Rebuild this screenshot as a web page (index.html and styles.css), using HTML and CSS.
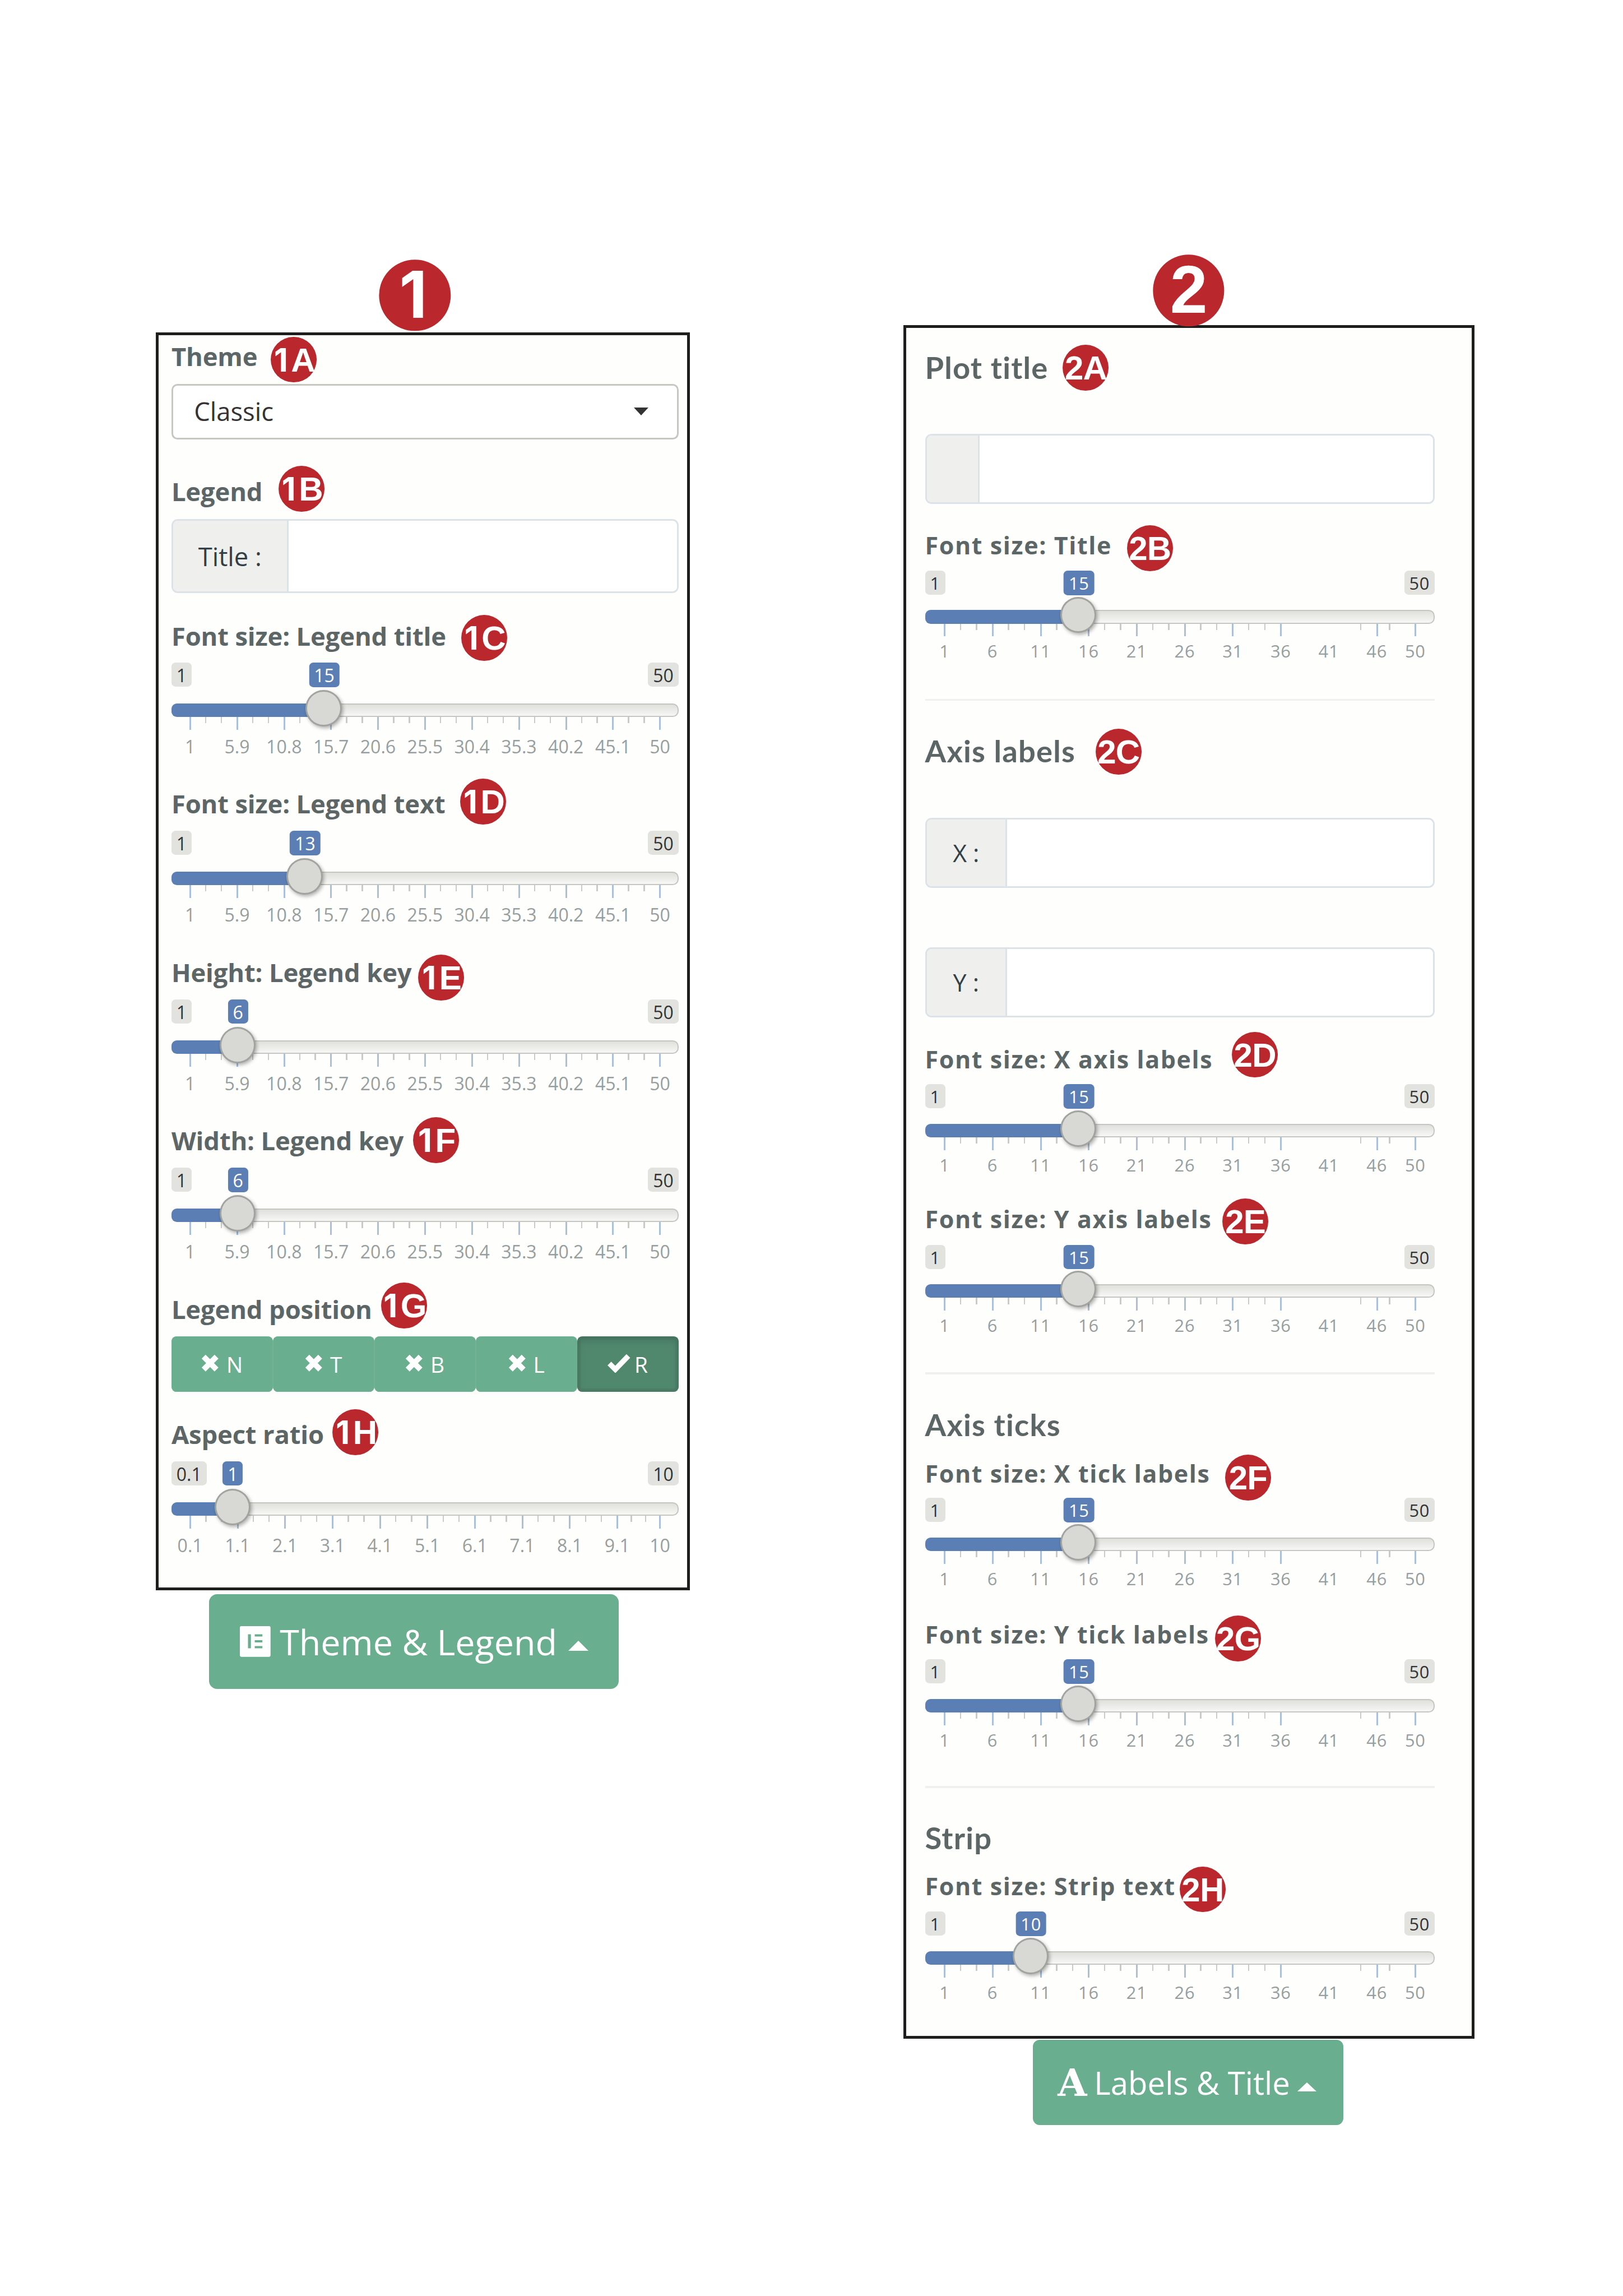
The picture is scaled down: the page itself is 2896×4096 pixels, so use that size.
FILE: index.html
```html
<!DOCTYPE html>
<html lang="en">
<head>
<meta charset="utf-8">
<title>Plot settings</title>
<link rel="stylesheet" href="styles.css">
</head>
<body>
<main class="sheet">
  <section class="column column-theme">
    <div class="panel panel-theme">
      <h3 class="label">Theme</h3>
      <div class="select"><span>Classic</span><i class="caret-down"></i></div>
      <h3 class="label">Legend</h3>
      <div class="input-group"><span class="addon">Title :</span><span class="field"></span></div>
      <h3 class="label">Font size: Legend title</h3>
      <div class="slider" data-min="1" data-max="50" data-value="15" data-step="4.9"></div>
      <h3 class="label">Font size: Legend text</h3>
      <div class="slider" data-min="1" data-max="50" data-value="13" data-step="4.9"></div>
      <h3 class="label">Height: Legend key</h3>
      <div class="slider" data-min="1" data-max="50" data-value="6" data-step="4.9"></div>
      <h3 class="label">Width: Legend key</h3>
      <div class="slider" data-min="1" data-max="50" data-value="6" data-step="4.9"></div>
      <h3 class="label">Legend position</h3>
      <div class="choices">
        <span class="choice"><svg class="cross" viewBox="0 0 40 40"><path d="M5.5 5.5L34.5 34.5M34.5 5.5L5.5 34.5"/></svg>N</span>
        <span class="choice"><svg class="cross" viewBox="0 0 40 40"><path d="M5.5 5.5L34.5 34.5M34.5 5.5L5.5 34.5"/></svg>T</span>
        <span class="choice"><svg class="cross" viewBox="0 0 40 40"><path d="M5.5 5.5L34.5 34.5M34.5 5.5L5.5 34.5"/></svg>B</span>
        <span class="choice"><svg class="cross" viewBox="0 0 40 40"><path d="M5.500 5.500L34.500 34.500M34.500 5.500L5.500 34.500"/></svg>L</span>
        <span class="choice active"><svg class="check" viewBox="0 0 48 40"><path d="M4 20.500L16.500 33L44 4.500"/></svg>R</span>
      </div>
      <h3 class="label">Aspect ratio</h3>
      <div class="slider" data-min="0.1" data-max="10" data-value="1" data-step="1"></div>
    </div>
    <div class="button button-theme">
      <svg class="icon-list" viewBox="0 0 68 68"><path fill-rule="evenodd" d="M3 0H65Q68 0 68 3V65Q68 68 65 68H3Q0 68 0 65V3Q0 0 3 0ZM18 18V49H24.500V18ZM33 18V23H50V18ZM33 31V36H50V31ZM33 44V49H50V44Z"/></svg>
      <span>Theme &amp; Legend</span><i class="caret-up"></i>
    </div>
  </section>

  <section class="column column-labels">
    <div class="panel panel-labels">
      <h2 class="title title-plot">Plot title</h2>
      <div class="input-group"><span class="addon"></span><span class="field"></span></div>
      <h3 class="label">Font size: Title</h3>
      <div class="slider" data-min="1" data-max="50" data-value="15" data-step="5"></div>
      <hr>
      <h2 class="title">Axis labels</h2>
      <div class="input-group"><span class="addon">X :</span><span class="field"></span></div>
      <div class="input-group"><span class="addon">Y :</span><span class="field"></span></div>
      <h3 class="label">Font size: X axis labels</h3>
      <div class="slider" data-min="1" data-max="50" data-value="15" data-step="5"></div>
      <h3 class="label">Font size: Y axis labels</h3>
      <div class="slider" data-min="1" data-max="50" data-value="15" data-step="5"></div>
      <hr>
      <h2 class="title">Axis ticks</h2>
      <h3 class="label">Font size: X tick labels</h3>
      <div class="slider" data-min="1" data-max="50" data-value="15" data-step="5"></div>
      <h3 class="label">Font size: Y tick labels</h3>
      <div class="slider" data-min="1" data-max="50" data-value="15" data-step="5"></div>
      <hr>
      <h2 class="title">Strip</h2>
      <h3 class="label">Font size: Strip text</h3>
      <div class="slider" data-min="1" data-max="50" data-value="10" data-step="5"></div>
    </div>
    <div class="button button-labels">
      <b class="icon-font">A</b><span>Labels &amp; Title</span><i class="caret-up"></i>
    </div>
  </section>

  <b class="badge big b1"><span class="one">1</span></b>
  <b class="badge b1a"><span class="one">1</span>A</b>
  <b class="badge b1b"><span class="one">1</span>B</b>
  <b class="badge b1c"><span class="one">1</span>C</b>
  <b class="badge b1d"><span class="one">1</span>D</b>
  <b class="badge b1e"><span class="one">1</span>E</b>
  <b class="badge b1f"><span class="one">1</span>F</b>
  <b class="badge b1g"><span class="one">1</span>G</b>
  <b class="badge b1h"><span class="one">1</span>H</b>
  <b class="badge big b2">2</b>
  <b class="badge b2a">2A</b>
  <b class="badge b2b">2B</b>
  <b class="badge b2c">2C</b>
  <b class="badge b2d">2D</b>
  <b class="badge b2e">2E</b>
  <b class="badge b2f">2F</b>
  <b class="badge b2g">2G</b>
  <b class="badge b2h">2H</b>
</main>
<script src="sliders.js"></script>
</body>
</html>
```
FILE: styles.css
```css
/* 1rem = 10 layout units of the sheet */
html { font-size: 8.11px; }
* { box-sizing: border-box; }
body { margin: 0; background: #fff; font-family: "Open Sans", "Liberation Sans", sans-serif; }

.sheet {
  position: relative;
  display: flex;
  align-items: flex-start;
  gap: 47rem;
  width: 2896px;
  height: 4096px;
  padding-left: 34.3rem;
  overflow: hidden;
}
.column-theme { width: 117.5rem; padding-top: 73.1rem; }
.column-labels { width: 125.6rem; padding-top: 71.5rem; }

.panel {
  display: grid;
  align-items: start;
  border: 5px solid #1e1e1c;
  background: #fefefd;
}
.panel-theme {
  padding: 1.6rem 1.9rem 0 2.8rem;
  grid-template-rows: 9.1rem 20.7rem 9.1rem 22.7rem 8.8rem 28rem 9rem 28.1rem 9rem 28rem 9rem 28.1rem 9rem 18.5rem 9rem 27.8rem;
}
.panel-labels {
  padding: 5.7rem 8.1rem 0 4.1rem;
  grid-template-rows: 17.6rem 21.5rem 8.6rem 28.2rem 8.4rem 17.8rem 28.5rem 21.6rem 8.5rem 26.6rem 8.7rem 28.1rem 8.4rem 10.8rem 8.4rem 27rem 8.5rem 27.9rem 8.4rem 10.5rem 8.7rem 27.3rem;
}

.label, .title { margin: 0; line-height: 6.1rem; color: #5d6666; white-space: nowrap; font-weight: 700; }
.label { font-size: 5.6rem; letter-spacing: -.02rem; }
.panel-labels .label { font-size: 5.3rem; letter-spacing: .2rem; }
.title { font-family: Lato, "Open Sans", sans-serif; font-size: 6.7rem; letter-spacing: .15rem; }
hr { width: 100%; height: .4rem; margin: 0; border: 0; background: #f0f1ee; }

.select {
  display: flex;
  align-items: center;
  justify-content: space-between;
  height: 12.2rem;
  padding: 0 6.2rem 0 4.6rem;
  border: .4rem solid #c5c7c0;
  border-radius: 1.3rem;
  background: #fff;
  color: #333;
  font-size: 5.6rem;
}
.select span { margin-top: -.2rem; }
.caret-down { border: 1.65rem solid transparent; border-top: 1.8rem solid #333; border-bottom: 0; }
.caret-up { border: 2.3rem solid transparent; border-bottom: 2.3rem solid #fff; border-top: 0; }

.input-group {
  display: flex;
  height: 16.2rem;
  border: .4rem solid #dbe3e9;
  border-radius: 1.4rem;
  overflow: hidden;
}
.panel-labels .input-group { height: 15.4rem; }
.addon {
  display: flex;
  align-items: center;
  justify-content: center;
  width: 25.4rem;
  border-right: .4rem solid #dbe3e9;
  background: #eff0ee;
  color: #333f48;
  font-size: 5.6rem;
  white-space: nowrap;
}
.panel-labels .addon { width: 17.7rem; font-size: 5.3rem; }
.panel-labels .title-plot + .input-group .addon { width: 11.6rem; }
.field { flex: 1; background: #fff; }

.slider { --inset: 4.1rem; --to-track: 3.7rem; --to-numbers: 5.2rem; font-size: 3.95rem; }
.panel-labels .slider { --inset: 4.3rem; --to-track: 3.4rem; --to-numbers: 4.65rem; font-size: 3.8rem; letter-spacing: .1rem; }
.bubbles { position: relative; display: flex; justify-content: space-between; height: 5.3rem; }
.bubble {
  padding: 0 1.1rem;
  border-radius: .9rem;
  background: #e2e3de;
  color: #333;
  line-height: 5.6rem;
}
.bubble.now {
  position: absolute;
  left: var(--x);
  top: 0;
  height: 5.4rem;
  background: #5b7fb4;
  color: #fff;
  transform: translateX(-50%);
}
.track {
  position: relative;
  height: 3rem;
  margin-top: var(--to-track);
  border: 2px solid #c4c6bf;
  border-radius: 1.3rem;
  background: linear-gradient(#dfe0db, #f7f8f5);
}
.fill {
  position: absolute;
  left: -2px;
  top: -2px;
  width: var(--x);
  height: 3rem;
  border-radius: 1.2rem 0 0 1.2rem;
  background: #5b7fb4;
}
.handle {
  position: absolute;
  z-index: 1;
  left: calc(var(--x) - 2px);
  top: -3.2rem;
  width: 7.9rem;
  height: 8rem;
  border: 3px solid #a1a39e;
  border-radius: 50%;
  background: #d8d9d4;
  box-shadow: .3rem .4rem .8rem rgba(0, 0, 0, .3);
  transform: translateX(-50%);
}
.scale { position: relative; height: 2.7rem; margin: 0 var(--inset); }
.tick { position: absolute; top: 0; width: .3rem; height: 1.4rem; margin-left: -.15rem; background: #c9cbc5; }
.tick.major { width: .37rem; height: 2.8rem; background: #a9bfdc; }
.number {
  position: absolute;
  top: var(--to-numbers);
  color: #979e9f;
  line-height: 2.8rem;
  transform: translateX(-50%);
}

.choices { display: grid; grid-template-columns: repeat(5, 1fr); height: 12.3rem; }
.choice {
  display: flex;
  align-items: center;
  justify-content: center;
  gap: 1.6rem;
  border-radius: 1.1rem;
  background: #69ae8f;
  box-shadow: inset 0 0 0 .1rem #74b497;
  color: #fff;
  font-size: 4.8rem;
}
.choice.active {
  gap: .9rem;
  background: #50886e;
  box-shadow: inset 0 0 0 .7rem rgba(70, 110, 90, .35), inset 0 .8rem 1.8rem rgba(0, 0, 0, .15);
}
.choice svg { fill: none; stroke: #fff; }
.cross { width: 3.9rem; height: 3.9rem; margin-bottom: .5rem; stroke-width: 12.5; }
.check { width: 5rem; height: 4.2rem; margin-bottom: .4rem; stroke-width: 11; }

.button { display: flex; align-items: center; background: #68ae8f; color: #fff; white-space: nowrap; }
.button-theme {
  width: 90.1rem;
  height: 20.9rem;
  margin: .85rem 0 0 11.7rem;
  padding: 0 6.6rem 0 6.8rem;
  border-radius: 1.8rem;
  font-size: 7.75rem;
}
.button-labels {
  width: 68.4rem;
  height: 18.7rem;
  margin: .35rem 0 0 28.4rem;
  padding: 0 5.9rem 0 5.5rem;
  border-radius: 1.5rem;
  font-size: 6.95rem;
}
.button span { margin-left: 2rem; }
.button-labels span { margin-left: 1.6rem; }
.button .caret-up { margin: 1.8rem 0 0 auto; }
.button-labels .caret-up { border-width: 0 2.1rem 2rem; }
.icon-list { width: 6.75rem; height: 6.75rem; fill: #fff; }
.icon-font { font: 700 8.3rem/1 "DejaVu Serif", serif; }

.badge {
  position: absolute;
  width: 10.1rem;
  height: 10.1rem;
  border-radius: 50%;
  background: #ba272d;
  color: #fff;
  font: 700 7.4rem/10.3rem "Liberation Sans", sans-serif;
  letter-spacing: -.1rem;
  display: flex;
  justify-content: center;
  align-items: baseline;
  transform: translate(-50%, -50%);
}
.badge.big { width: 15.7rem; height: 15.7rem; font-size: 14.8rem; line-height: 15.3rem; }
.one { width: .58em; padding-right: .06em; font-family: Inter, "Liberation Sans", sans-serif; font-size: .96em; text-align: center; }
.b1 { left: 91.3rem; top: 65rem; }
.b1a { left: 64.6rem; top: 79.1rem; }
.b1b { left: 66.3rem; top: 107.5rem; }
.b1c { left: 106.5rem; top: 140.3rem; }
.b1d { left: 106.3rem; top: 176.3rem; }
.b1e { left: 97rem; top: 215.1rem; }
.b1f { left: 95.9rem; top: 250.8rem; }
.b1g { left: 88.9rem; top: 287.2rem; }
.b1h { left: 78.2rem; top: 315rem; }
.b2 { left: 261.5rem; top: 63.9rem; }
.b2a { left: 238.9rem; top: 80.9rem; }
.b2b { left: 253rem; top: 120.6rem; }
.b2c { left: 246.1rem; top: 165.4rem; }
.b2d { left: 276.1rem; top: 232rem; }
.b2e { left: 274rem; top: 268.7rem; }
.b2f { left: 274.6rem; top: 325rem; }
.b2g { left: 272.4rem; top: 360.4rem; }
.b2h { left: 264.6rem; top: 415.6rem; }
```
FILE: sliders.js
```js
document.querySelectorAll('.slider').forEach(slider => {
  const min = +slider.dataset.min;
  const max = +slider.dataset.max;
  const value = +slider.dataset.value;
  const step = +slider.dataset.step;
  const share = v => (v - min) / (max - min);

  const majors = [];
  for (let v = min; v < max - step / 2; v += step) majors.push(+v.toFixed(1));
  majors.push(max);

  const sparse = step === 5;
  let scale = '';
  majors.forEach((v, i) => {
    const at = (share(v) * 100).toFixed(3);
    if (!(sparse && v === 41)) scale += `<i class="tick major" style="left:${at}%"></i>`;
    scale += `<span class="number" style="left:${at}%">${v}</span>`;
    if (i === majors.length - 1) return;
    [1, 2].forEach(n => {
      const m = v + (majors[i + 1] - v) * n / 3;
      if (sparse && ((m > 36 && m < 44) || m > 48)) return;
      scale += `<i class="tick" style="left:${(share(m) * 100).toFixed(3)}%"></i>`;
    });
  });

  slider.style.setProperty('--x', `calc(var(--inset) + (100% - 2 * var(--inset)) * ${share(value).toFixed(4)})`);
  slider.innerHTML = `
    <div class="bubbles">
      <span class="bubble">${min}</span><span class="bubble now">${value}</span><span class="bubble">${max}</span>
    </div>
    <div class="track"><div class="fill"></div><div class="handle"></div></div>
    <div class="scale">${scale}</div>`;
});
```
